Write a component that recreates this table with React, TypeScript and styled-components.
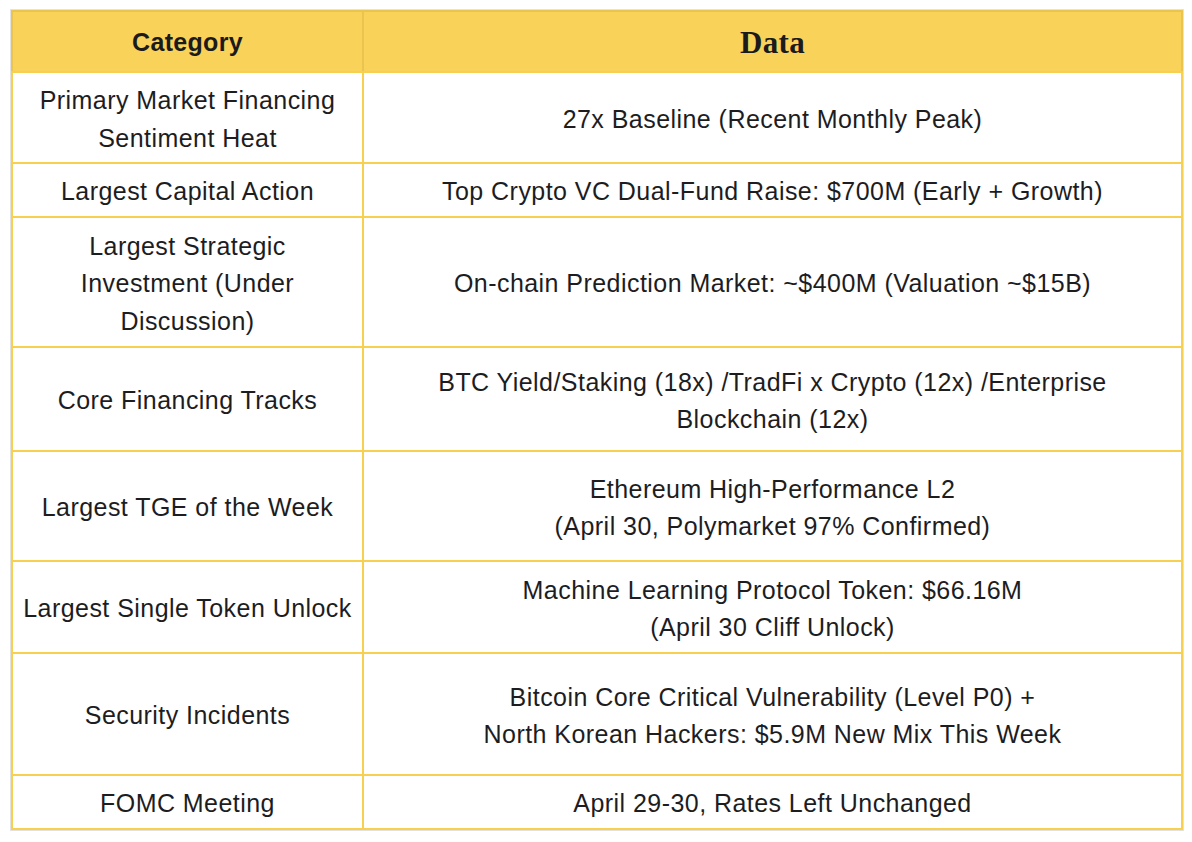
import React from 'react';
import styled, { createGlobalStyle } from 'styled-components';

interface Entry {
  category: string[];
  data: string[];
  height: number;
}

const rows: Entry[] = [
  { category: ['Primary Market Financing', 'Sentiment Heat'], data: ['27x Baseline (Recent Monthly Peak)'], height: 89 },
  { category: ['Largest Capital Action'], data: ['Top Crypto VC Dual-Fund Raise: $700M (Early + Growth)'], height: 52 },
  {
    category: ['Largest Strategic', 'Investment (Under', 'Discussion)'],
    data: ['On-chain Prediction Market: ~$400M (Valuation ~$15B)'],
    height: 128,
  },
  {
    category: ['Core Financing Tracks'],
    data: ['BTC Yield/Staking (18x) /TradFi x Crypto (12x) /Enterprise', 'Blockchain (12x)'],
    height: 102,
  },
  {
    category: ['Largest TGE of the Week'],
    data: ['Ethereum High-Performance L2', '(April 30, Polymarket 97% Confirmed)'],
    height: 108,
  },
  {
    category: ['Largest Single Token Unlock'],
    data: ['Machine Learning Protocol Token: $66.16M', '(April 30 Cliff Unlock)'],
    height: 90,
  },
  {
    category: ['Security Incidents'],
    data: ['Bitcoin Core Critical Vulnerability (Level P0) +', 'North Korean Hackers: $5.9M New Mix This Week'],
    height: 120,
  },
  { category: ['FOMC Meeting'], data: ['April 29-30, Rates Left Unchanged'], height: 52 },
];

const GlobalStyle = createGlobalStyle`
  *, *::before, *::after {
    box-sizing: border-box;
  }
  body {
    margin: 0;
    background: #ffffff;
    font-family: "Liberation Sans", Arial, Helvetica, sans-serif;
    color: #1d1d1f;
  }
`;

const Frame = styled.div`
  width: 1174px;
  margin: 9px 0 0 10px;
  border: 1px solid #e2e2e2;
`;

const Head = styled.div`
  display: grid;
  grid-template-columns: 349px 817px;
  gap: 2px;
  padding: 2px 2px 0;
  background: #e9c550;
`;

const HeadCell = styled.div<{ $serif?: boolean }>`
  height: 59px;
  display: flex;
  align-items: center;
  justify-content: center;
  padding-top: 2px;
  background: #f9d25a;
  font-weight: bold;
  font-family: ${(p) => (p.$serif ? '"Liberation Serif", "Times New Roman", serif' : '"Liberation Sans", Arial, sans-serif')};
  font-size: ${(p) => (p.$serif ? '31px' : '25px')};
  letter-spacing: 0.3px;
  color: #1b1b1d;
`;

const Body = styled.div`
  display: flex;
  flex-direction: column;
  gap: 2px;
  padding: 2px;
  background: #f8d050;
`;

const Row = styled.div<{ $h: number }>`
  display: grid;
  grid-template-columns: 349px 817px;
  gap: 2px;
  height: ${(p) => p.$h}px;
`;

const Cell = styled.div`
  display: flex;
  align-items: center;
  justify-content: center;
  padding-top: 4px;
  text-align: center;
  background: #ffffff;
  font-size: 25px;
  line-height: 37.5px;
  letter-spacing: 0.45px;
  white-space: nowrap;
`;

const Lines: React.FC<{ lines: string[] }> = ({ lines }) => (
  <div>
    {lines.map((line, i) => (
      <React.Fragment key={i}>
        {i > 0 && <br />}
        {line}
      </React.Fragment>
    ))}
  </div>
);

const App: React.FC = () => {
  return (
    <>
      <GlobalStyle />
      <Frame>
        <Head>
          <HeadCell>Category</HeadCell>
          <HeadCell $serif>Data</HeadCell>
        </Head>
        <Body>
          {rows.map((row) => (
            <Row key={row.category.join(' ')} $h={row.height}>
              <Cell>
                <Lines lines={row.category} />
              </Cell>
              <Cell>
                <Lines lines={row.data} />
              </Cell>
            </Row>
          ))}
        </Body>
      </Frame>
    </>
  );
};

export default App;
